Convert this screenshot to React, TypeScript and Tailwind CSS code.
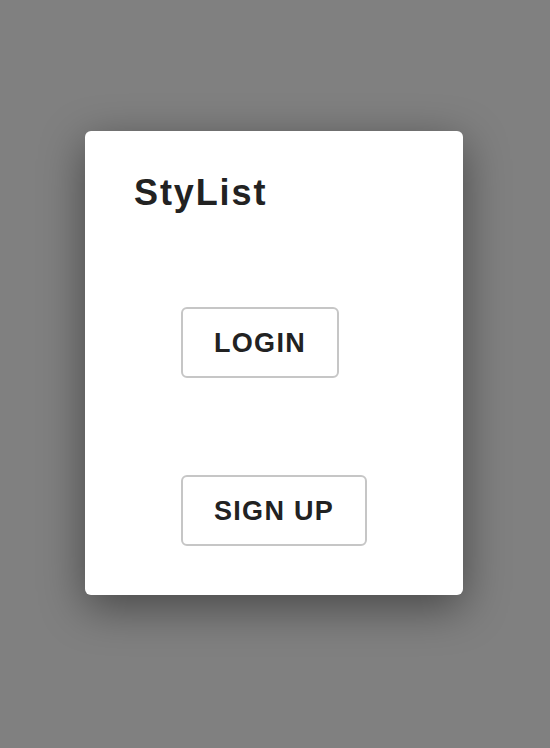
const App = () => {
  return (
    <div
      className="min-h-screen w-full bg-[#808080] flex justify-center pt-[131px] pr-[2px]"
      style={{ fontFamily: '"Liberation Sans", Arial, sans-serif' }}
    >
      <div className="w-[378px] h-[464px] bg-white rounded-[6px] shadow-[0_12px_45px_rgba(0,0,0,0.45)] flex flex-col items-start pt-[42px] pl-[49px]">
        <h1 className="text-[36px] leading-[40px] font-bold tracking-[1.9px] text-[#222222]">
          StyList
        </h1>

        <button className="mt-[94px] ml-[47px] h-[71px] px-[31px] pt-[2px] border-2 border-[#c6c6c6] rounded-[6px] bg-white text-[27px] font-bold tracking-[1.3px] text-[#222222]">
          LOGIN
        </button>

        <button className="mt-[97px] ml-[47px] h-[71px] px-[31px] pt-[2px] border-2 border-[#c6c6c6] rounded-[6px] bg-white text-[27px] font-bold tracking-[1.3px] text-[#222222]">
          SIGN UP
        </button>
      </div>
    </div>
  );
};

export default App;
